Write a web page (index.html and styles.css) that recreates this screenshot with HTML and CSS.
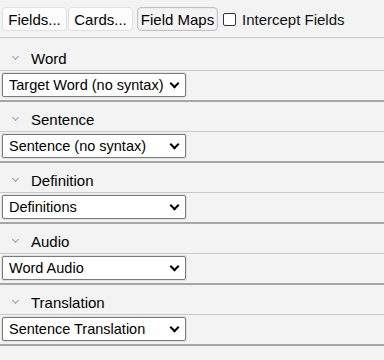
FILE: index.html
```html
<!DOCTYPE html>
<html lang="en">
<head>
    <meta charset="UTF-8">
    <title>Field Maps</title>
    <link rel="stylesheet" href="styles.css">
</head>
<body>
    <div class="toolbar">
        <div class="btn-group">
            <button class="btn">Fields...</button>
            <button class="btn">Cards...</button>
        </div>
        <button class="btn active">Field Maps</button>
        <label class="check"><span class="box"></span>Intercept Fields</label>
    </div>

    <div class="section">
        <div class="section-head"><span class="chev"></span>Word</div>
        <div class="section-body">
            <div class="select">Target Word (no syntax)<span class="arrow"></span></div>
        </div>
    </div>
    <div class="section">
        <div class="section-head"><span class="chev"></span>Sentence</div>
        <div class="section-body">
            <div class="select">Sentence (no syntax)<span class="arrow"></span></div>
        </div>
    </div>
    <div class="section">
        <div class="section-head"><span class="chev"></span>Definition</div>
        <div class="section-body">
            <div class="select">Definitions<span class="arrow"></span></div>
        </div>
    </div>
    <div class="section">
        <div class="section-head"><span class="chev"></span>Audio</div>
        <div class="section-body">
            <div class="select">Word Audio<span class="arrow"></span></div>
        </div>
    </div>
    <div class="section">
        <div class="section-head"><span class="chev"></span>Translation</div>
        <div class="section-body">
            <div class="select">Sentence Translation<span class="arrow"></span></div>
        </div>
    </div>
</body>
</html>
```

FILE: styles.css
```css
body {
    margin: 0;
    background-color: #f3f3f3;
    font-family: 'Liberation Sans', Arial, sans-serif;
    font-size: 15px;
    color: #000;
}

.toolbar {
    display: flex;
    align-items: center;
    height: 38px;
    padding: 1px 2px 0;
    border-bottom: 1px solid #c6c6c6;
    box-sizing: border-box;
}

.btn-group {
    display: flex;
}

.btn {
    font-family: inherit;
    font-size: 15px;
    height: 24px;
    padding: 0;
    margin: 0 1px 0 0;
    background-color: #fdfdfd;
    border: 1px solid #e0e0e0;
    border-radius: 4px;
    color: #000;
}

.btn-group .btn {
    width: 65px;
}

.btn.active {
    width: 81px;
    margin-left: 3px;
    background-color: #f4f4f4;
    border-color: #c2c2c2;
    box-shadow: inset 0 0 2px rgba(0, 0, 0, 0.12);
}

.check {
    display: flex;
    align-items: center;
    margin-left: 4px;
    color: #111;
}

.box {
    width: 11px;
    height: 11px;
    border: 1px solid #333;
    border-radius: 2px;
    background-color: #fff;
    margin-right: 6px;
}

.section-head {
    display: flex;
    align-items: center;
    height: 29px;
    padding: 5px 0 0 10px;
    box-sizing: border-box;
}

.toolbar + .section .section-head {
    height: 32px;
    padding-top: 8px;
}

.chev {
    width: 4px;
    height: 4px;
    border-right: 1px solid #a0a0a0;
    border-bottom: 1px solid #a0a0a0;
    transform: rotate(45deg);
    margin: -3px 13px 0 3px;
}

.section-body {
    border-top: 1px solid #c8c8c8;
    border-bottom: 2px solid #a6a6a6;
    padding: 2px 2px 3px;
}

.select {
    display: flex;
    align-items: center;
    justify-content: space-between;
    width: 184px;
    height: 24px;
    box-sizing: border-box;
    padding: 0 7px 0 6px;
    font-size: 14.5px;
    background-color: #fff;
    border: 1px solid #7a7a7a;
    border-radius: 2px;
    box-shadow: 0 0 0 1px #e2e2e2;
    white-space: nowrap;
}

.arrow {
    width: 5px;
    height: 5px;
    border-right: 2px solid #000;
    border-bottom: 2px solid #000;
    transform: rotate(45deg);
    margin-top: -4px;
}
```
